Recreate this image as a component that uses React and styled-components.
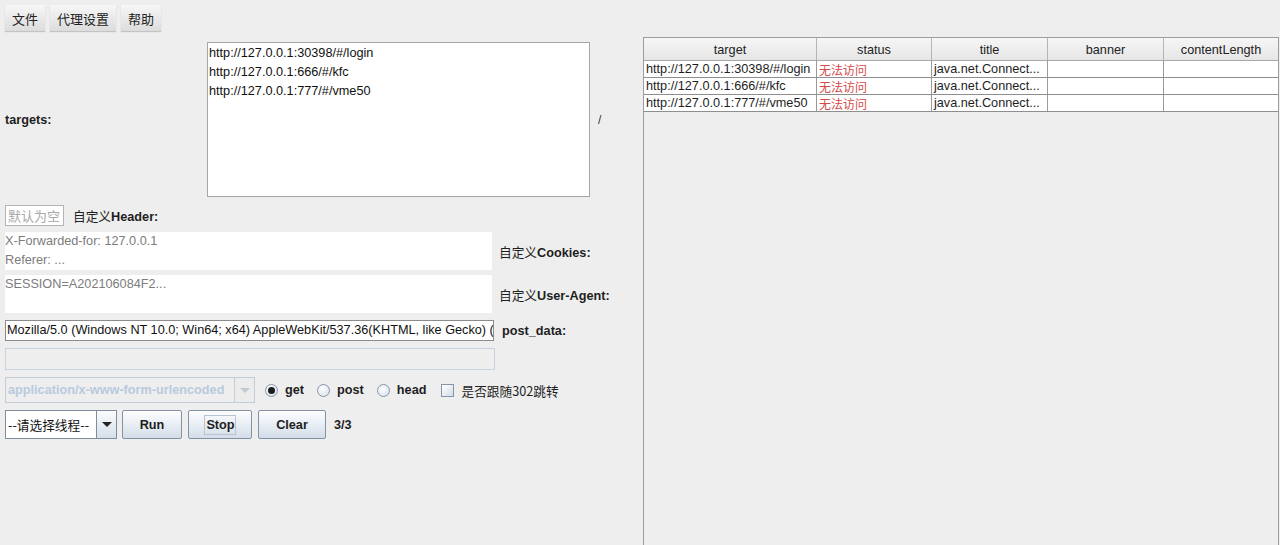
import React from "react";
import styled, { createGlobalStyle, css } from "styled-components";

const SANS = `"Liberation Sans", Arial, "Noto Sans CJK SC", sans-serif`;
const CJK = `"Noto Sans CJK SC", "Liberation Sans", sans-serif`;

const GlobalStyle = createGlobalStyle`
  html, body { margin: 0; padding: 0; background: #eeeeee; }
  body { font-family: ${SANS}; font-size: 12.7px; color: #1e1e1e; }
  #root { width: 1280px; height: 545px; overflow: hidden; }
  * { box-sizing: border-box; }
`;

const Window = styled.div`
  display: flex;
  width: 1280px;
  height: 545px;
  background: #eeeeee;
`;

/* ---------- left: request form ---------- */
const FormPane = styled.div`
  width: 643px;
  flex: none;
  padding-left: 5px;
  display: flex;
  flex-direction: column;
`;

const MenuBar = styled.div`
  display: flex;
  gap: 5px;
  margin-top: 5px;
  height: 26px;
`;

const MenuButton = styled.div`
  display: flex;
  align-items: center;
  justify-content: center;
  padding: 0 7px;
  font-family: ${CJK};
  font-size: 13px;
  color: #222;
  background: linear-gradient(#f7f7f7, #dcdcdc);
  box-shadow: 0 1px 1px rgba(0, 0, 0, 0.18);
`;

const TargetsRow = styled.div`
  display: grid;
  grid-template-columns: 202px 383px auto;
  align-items: center;
  margin-top: 11px;
  height: 155px;
`;

const BoldLabel = styled.span`
  font-weight: bold;
  white-space: nowrap;
  ${(p) => p.$offset && css`margin-left: ${p.$offset}px;`}
`;

const CjkText = styled.span`
  font-family: ${CJK};
  font-weight: normal;
`;

const TextBox = styled.div`
  height: 100%;
  background: #ffffff;
  border: 1px solid #a6a6a6;
  padding: 1px 1px;
  line-height: 19px;
  color: #111;
`;

const Slash = styled.span`
  margin-left: 8px;
  font-size: 12px;
  color: #333;
`;

const HeaderRow = styled.div`
  display: flex;
  align-items: center;
  gap: 9px;
  margin-top: 8px;
  height: 21px;
`;

const SmallInput = styled.div`
  width: 59px;
  height: 21px;
  border: 1px solid #b4b4b4;
  background: #fff;
  font-family: ${CJK};
  font-size: 13px;
  color: #a8a8a8;
  line-height: 19px;
  padding-left: 2px;
  white-space: nowrap;
  overflow: hidden;
`;

const FieldRow = styled.div`
  display: flex;
  align-items: center;
  margin-top: ${(p) => p.$top}px;
  height: ${(p) => p.$h}px;
`;

const PlainArea = styled.div`
  width: 487px;
  height: 100%;
  background: #ffffff;
  color: #7c7c7c;
  line-height: 19px;
  margin-right: 7px;
`;

const LineInput = styled.div`
  width: 489px;
  flex: none;
  height: 100%;
  background: #ffffff;
  border: 1px solid #8c8c8c;
  line-height: 19px;
  padding-left: 1px;
  white-space: nowrap;
  overflow: hidden;
  color: #111;
`;

const DisabledInput = styled.div`
  width: 490px;
  height: 22px;
  margin-top: 7px;
  border: 1px solid #c9d3de;
  background: #eeeeee;
`;

const OptionsRow = styled.div`
  display: flex;
  align-items: center;
  margin-top: 7px;
  height: 26px;
`;

const Combo = styled.div`
  display: flex;
  width: ${(p) => p.$w}px;
  height: 100%;
  border: 1px solid ${(p) => (p.$disabled ? "#c3cdd8" : "#7f8e9e")};
  background: ${(p) => (p.$disabled ? "#eeeeee" : "#ffffff")};
`;

const ComboText = styled.div`
  flex: 1;
  display: flex;
  align-items: center;
  padding-left: 2px;
  white-space: nowrap;
  overflow: hidden;
  font-weight: bold;
  color: ${(p) => (p.$disabled ? "#b9cade" : "#111")};
`;

const ComboArrow = styled.div`
  width: 20px;
  flex: none;
  display: flex;
  align-items: center;
  justify-content: center;
  border-left: 1px solid ${(p) => (p.$disabled ? "#c3cdd8" : "#7f8e9e")};
  background: ${(p) =>
    p.$disabled ? "#ececec" : "linear-gradient(#fbfcfd, #d6dee8)"};
  &::after {
    content: "";
    border-left: 5px solid transparent;
    border-right: 5px solid transparent;
    border-top: 5px solid ${(p) => (p.$disabled ? "#c0c8d2" : "#222")};
  }
`;

const Choice = styled.label`
  display: flex;
  align-items: center;
  gap: 7px;
  margin-left: ${(p) => p.$gap}px;
  font-weight: bold;
  white-space: nowrap;
`;

const RadioDot = styled.span`
  width: 13px;
  height: 13px;
  border-radius: 50%;
  border: 1px solid #8595a8;
  background: radial-gradient(circle at 40% 35%, #ffffff, #d4dde8);
  display: flex;
  align-items: center;
  justify-content: center;
  &::after {
    content: "";
    display: ${(p) => (p.$on ? "block" : "none")};
    width: 7px;
    height: 7px;
    border-radius: 50%;
    background: #1c1c1c;
  }
`;

const CheckBox = styled.span`
  width: 13px;
  height: 13px;
  border: 1px solid #8595a8;
  background: linear-gradient(135deg, #ffffff, #d3dce7);
`;

const ActionRow = styled.div`
  display: flex;
  align-items: center;
  margin-top: 7px;
  height: 29px;
`;

const ActionButton = styled.div`
  width: ${(p) => p.$w}px;
  height: 29px;
  margin-left: ${(p) => p.$gap}px;
  display: flex;
  align-items: center;
  justify-content: center;
  font-weight: bold;
  color: #1e1e1e;
  border: 1px solid #8293a6;
  border-radius: 2px;
  background: linear-gradient(#fdfdfe, #e8eef4 50%, #d3dde8);
`;

const FocusRing = styled.span`
  border: 1px solid #b7c4d3;
  padding: 1px 0 1px 1px;
  line-height: 16px;
`;

const Counter = styled.span`
  margin-left: 8px;
  font-weight: bold;
`;

/* ---------- right: results table ---------- */
const ResultPane = styled.div`
  flex: 1;
  margin-top: 37px;
  margin-right: 1px;
  border: 1px solid #9d9d9d;
  border-bottom: none;
  background: #eeeeee;
`;

const COLS = "173px 115px 116px 116px 1fr";

const HeadRow = styled.div`
  display: grid;
  grid-template-columns: ${COLS};
  height: 23px;
  background: linear-gradient(#f6f6f6, #e6e6e6);
  border-bottom: 1px solid #a8a8a8;
`;

const HeadCell = styled.div`
  display: flex;
  align-items: center;
  justify-content: center;
  padding-top: 2px;
  color: #222;
  border-right: 1px solid #b4b4b4;
  &:last-child { border-right: none; }
`;

const BodyRow = styled.div`
  display: grid;
  grid-template-columns: ${COLS};
  height: 17px;
  background: #ffffff;
  border-bottom: 1px solid #8e8e8e;
`;

const Cell = styled.div`
  display: flex;
  align-items: center;
  padding-left: 2px;
  white-space: nowrap;
  overflow: hidden;
  border-right: 1px solid #9a9a9a;
  &:last-child { border-right: none; }
  ${(p) =>
    p.$status &&
    css`
      font-family: ${CJK};
      font-size: 12px;
      line-height: 14px;
      color: #d34a4a;
      padding-top: 2px;
    `}
`;

const targets = [
  "http://127.0.0.1:30398/#/login",
  "http://127.0.0.1:666/#/kfc",
  "http://127.0.0.1:777/#/vme50",
];

const columns = ["target", "status", "title", "banner", "contentLength"];

export default function App() {
  return (
    <>
      <GlobalStyle />
      <Window>
        <FormPane>
          <MenuBar>
            <MenuButton>文件</MenuButton>
            <MenuButton>代理设置</MenuButton>
            <MenuButton>帮助</MenuButton>
          </MenuBar>

          <TargetsRow>
            <BoldLabel>targets:</BoldLabel>
            <TextBox>
              {targets.map((t) => (
                <div key={t}>{t}</div>
              ))}
            </TextBox>
            <Slash>/</Slash>
          </TargetsRow>

          <HeaderRow>
            <SmallInput>默认为空</SmallInput>
            <BoldLabel>
              <CjkText>自定义</CjkText>Header:
            </BoldLabel>
          </HeaderRow>

          <FieldRow $top={6} $h={38}>
            <PlainArea>
              <div>X-Forwarded-for: 127.0.0.1</div>
              <div>Referer: ...</div>
            </PlainArea>
            <BoldLabel>
              <CjkText>自定义</CjkText>Cookies:
            </BoldLabel>
          </FieldRow>

          <FieldRow $top={5} $h={38}>
            <PlainArea>
              <div>SESSION=A202106084F2...</div>
            </PlainArea>
            <BoldLabel>
              <CjkText>自定义</CjkText>User-Agent:
            </BoldLabel>
          </FieldRow>

          <FieldRow $top={7} $h={21}>
            <LineInput>
              Mozilla/5.0 (Windows NT 10.0; Win64; x64) AppleWebKit/537.36(KHTML, like Gecko) (
            </LineInput>
            <BoldLabel $offset={8}>post_data:</BoldLabel>
          </FieldRow>

          <DisabledInput />

          <OptionsRow>
            <Combo $w={250} $disabled>
              <ComboText $disabled>application/x-www-form-urlencoded</ComboText>
              <ComboArrow $disabled />
            </Combo>
            <Choice $gap={10}>
              <RadioDot $on />
              get
            </Choice>
            <Choice $gap={13}>
              <RadioDot />
              post
            </Choice>
            <Choice $gap={13}>
              <RadioDot />
              head
            </Choice>
            <Choice $gap={15}>
              <CheckBox />
              <CjkText>是否跟随302跳转</CjkText>
            </Choice>
          </OptionsRow>

          <ActionRow>
            <Combo $w={112}>
              <ComboText>
                <CjkText>--请选择线程--</CjkText>
              </ComboText>
              <ComboArrow />
            </Combo>
            <ActionButton $w={60} $gap={5}>Run</ActionButton>
            <ActionButton $w={64} $gap={6}>
              <FocusRing>Stop</FocusRing>
            </ActionButton>
            <ActionButton $w={68} $gap={6}>Clear</ActionButton>
            <Counter>3/3</Counter>
          </ActionRow>
        </FormPane>

        <ResultPane>
          <HeadRow>
            {columns.map((c) => (
              <HeadCell key={c}>{c}</HeadCell>
            ))}
          </HeadRow>
          {targets.map((t) => (
            <BodyRow key={t}>
              <Cell>{t}</Cell>
              <Cell $status>无法访问</Cell>
              <Cell>java.net.Connect...</Cell>
              <Cell />
              <Cell />
            </BodyRow>
          ))}
        </ResultPane>
      </Window>
    </>
  );
}
